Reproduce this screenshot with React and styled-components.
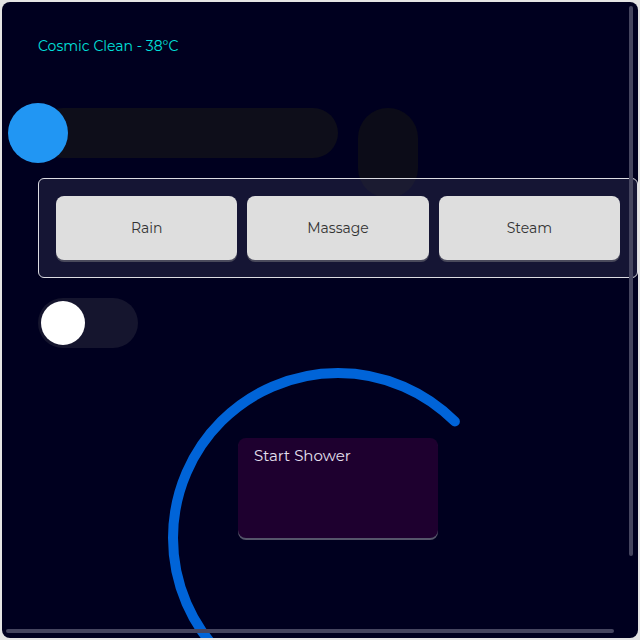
import React from "react"
import styled, { createGlobalStyle } from "styled-components"

const GlobalStyle = createGlobalStyle`
	html, body {
		margin: 0;
		padding: 0;
		background: #e4e4e4;
	}
	* {
		box-sizing: border-box;
	}
`

const Page = styled.div`
	padding: 2px;
	width: 640px;
	height: 640px;
`

const Frame = styled.div`
	position: relative;
	width: 636px;
	height: 636px;
`

const Shell = styled.div`
	width: 100%;
	height: 100%;
	border-radius: 8px;
	background: #00001f;
	overflow: scroll;
	padding: 36px 20px 20px 36px;
	font-family: Montserrat, "Open Sans", "Noto Sans", sans-serif;
	scrollbar-width: thin;
	scrollbar-color: #45455f transparent;
`

const ScrollThumb = styled.div`
	position: absolute;
	background: #45455f;
	border-radius: 2px;
	pointer-events: none;
	${p => p.$vertical
		? "right: 5px; top: 4px; width: 4px; height: 550px;"
		: "bottom: 5px; left: 4px; height: 4px; width: 608px;"}
`

const Column = styled.div`
	width: 600px;
	display: flex;
	flex-direction: column;
	gap: 20px;
`

const Title = styled.div`
	color: #00e0dc;
	font-size: 14px;
	line-height: 17px;
	margin-bottom: 33px;
`

const SliderRow = styled.div`
	display: flex;
	align-items: flex-start;
	gap: 20px;
	height: 50px;
`

const Track = styled.div`
	position: relative;
	width: 300px;
	height: 50px;
	border-radius: 25px;
	background: #0e0e1a;
`

const Thumb = styled.div`
	position: absolute;
	left: -30px;
	top: -5px;
	width: 60px;
	height: 60px;
	border-radius: 50%;
	background: #2196f3;
`

const VerticalTrack = styled.div`
	width: 60px;
	height: 90px;
	border-radius: 30px;
	background: #0c0c18;
	flex-shrink: 0;
`

const ModePanel = styled.div`
	display: flex;
	gap: 10px;
	padding: 17px;
	border: 1px solid #dcdce2;
	border-radius: 6px;
	background: rgba(42, 42, 74, 0.5);
`

const ModeButton = styled.button`
	flex: 1;
	height: 64px;
	border: none;
	border-radius: 8px;
	background: #dedede;
	box-shadow: 0 2px 0 #4a4a5c;
	color: #333;
	font-family: inherit;
	font-size: 14px;
	cursor: pointer;
`

const Toggle = styled.div`
	width: 100px;
	height: 50px;
	border-radius: 25px;
	background: #15152e;
	padding: 3px;
	display: flex;
	align-items: center;
`

const Knob = styled.div`
	width: 44px;
	height: 44px;
	border-radius: 50%;
	background: #fff;
`

const Ring = styled.div`
	position: relative;
	align-self: center;
	width: 340px;
	height: 340px;
`

const StartButton = styled.button`
	position: absolute;
	left: 50%;
	top: 50%;
	transform: translate(-50%, -100%);
	width: 200px;
	height: 100px;
	border: none;
	border-radius: 8px;
	background: #1e002f;
	box-shadow: 0 2px 0 #55556a;
	color: #e6e0f0;
	font-family: inherit;
	font-size: 15px;
	text-align: left;
	padding: 8px 16px;
	display: flex;
	align-items: flex-start;
	cursor: pointer;
`

const R = 165
const C = 2 * Math.PI * R

export default function App() {
	return (
		<Page>
			<GlobalStyle />
			<Frame>
				<Shell>
					<Column>
						<Title>Cosmic Clean - 38°C</Title>
						<SliderRow>
							<Track>
								<Thumb />
							</Track>
							<VerticalTrack />
						</SliderRow>
						<ModePanel>
							<ModeButton>Rain</ModeButton>
							<ModeButton>Massage</ModeButton>
							<ModeButton>Steam</ModeButton>
						</ModePanel>
						<Toggle>
							<Knob />
						</Toggle>
						<Ring>
							<svg width="340" height="340" viewBox="0 0 340 340">
								<circle
									cx="170"
									cy="170"
									r={R}
									fill="none"
									stroke="#0064d8"
									strokeWidth="10"
									strokeLinecap="round"
									strokeDasharray={`${C * 0.75} ${C}`}
									transform="rotate(45 170 170)"
								/>
							</svg>
							<StartButton>Start Shower</StartButton>
						</Ring>
					</Column>
				</Shell>
				<ScrollThumb $vertical />
				<ScrollThumb />
			</Frame>
		</Page>
	)
}
